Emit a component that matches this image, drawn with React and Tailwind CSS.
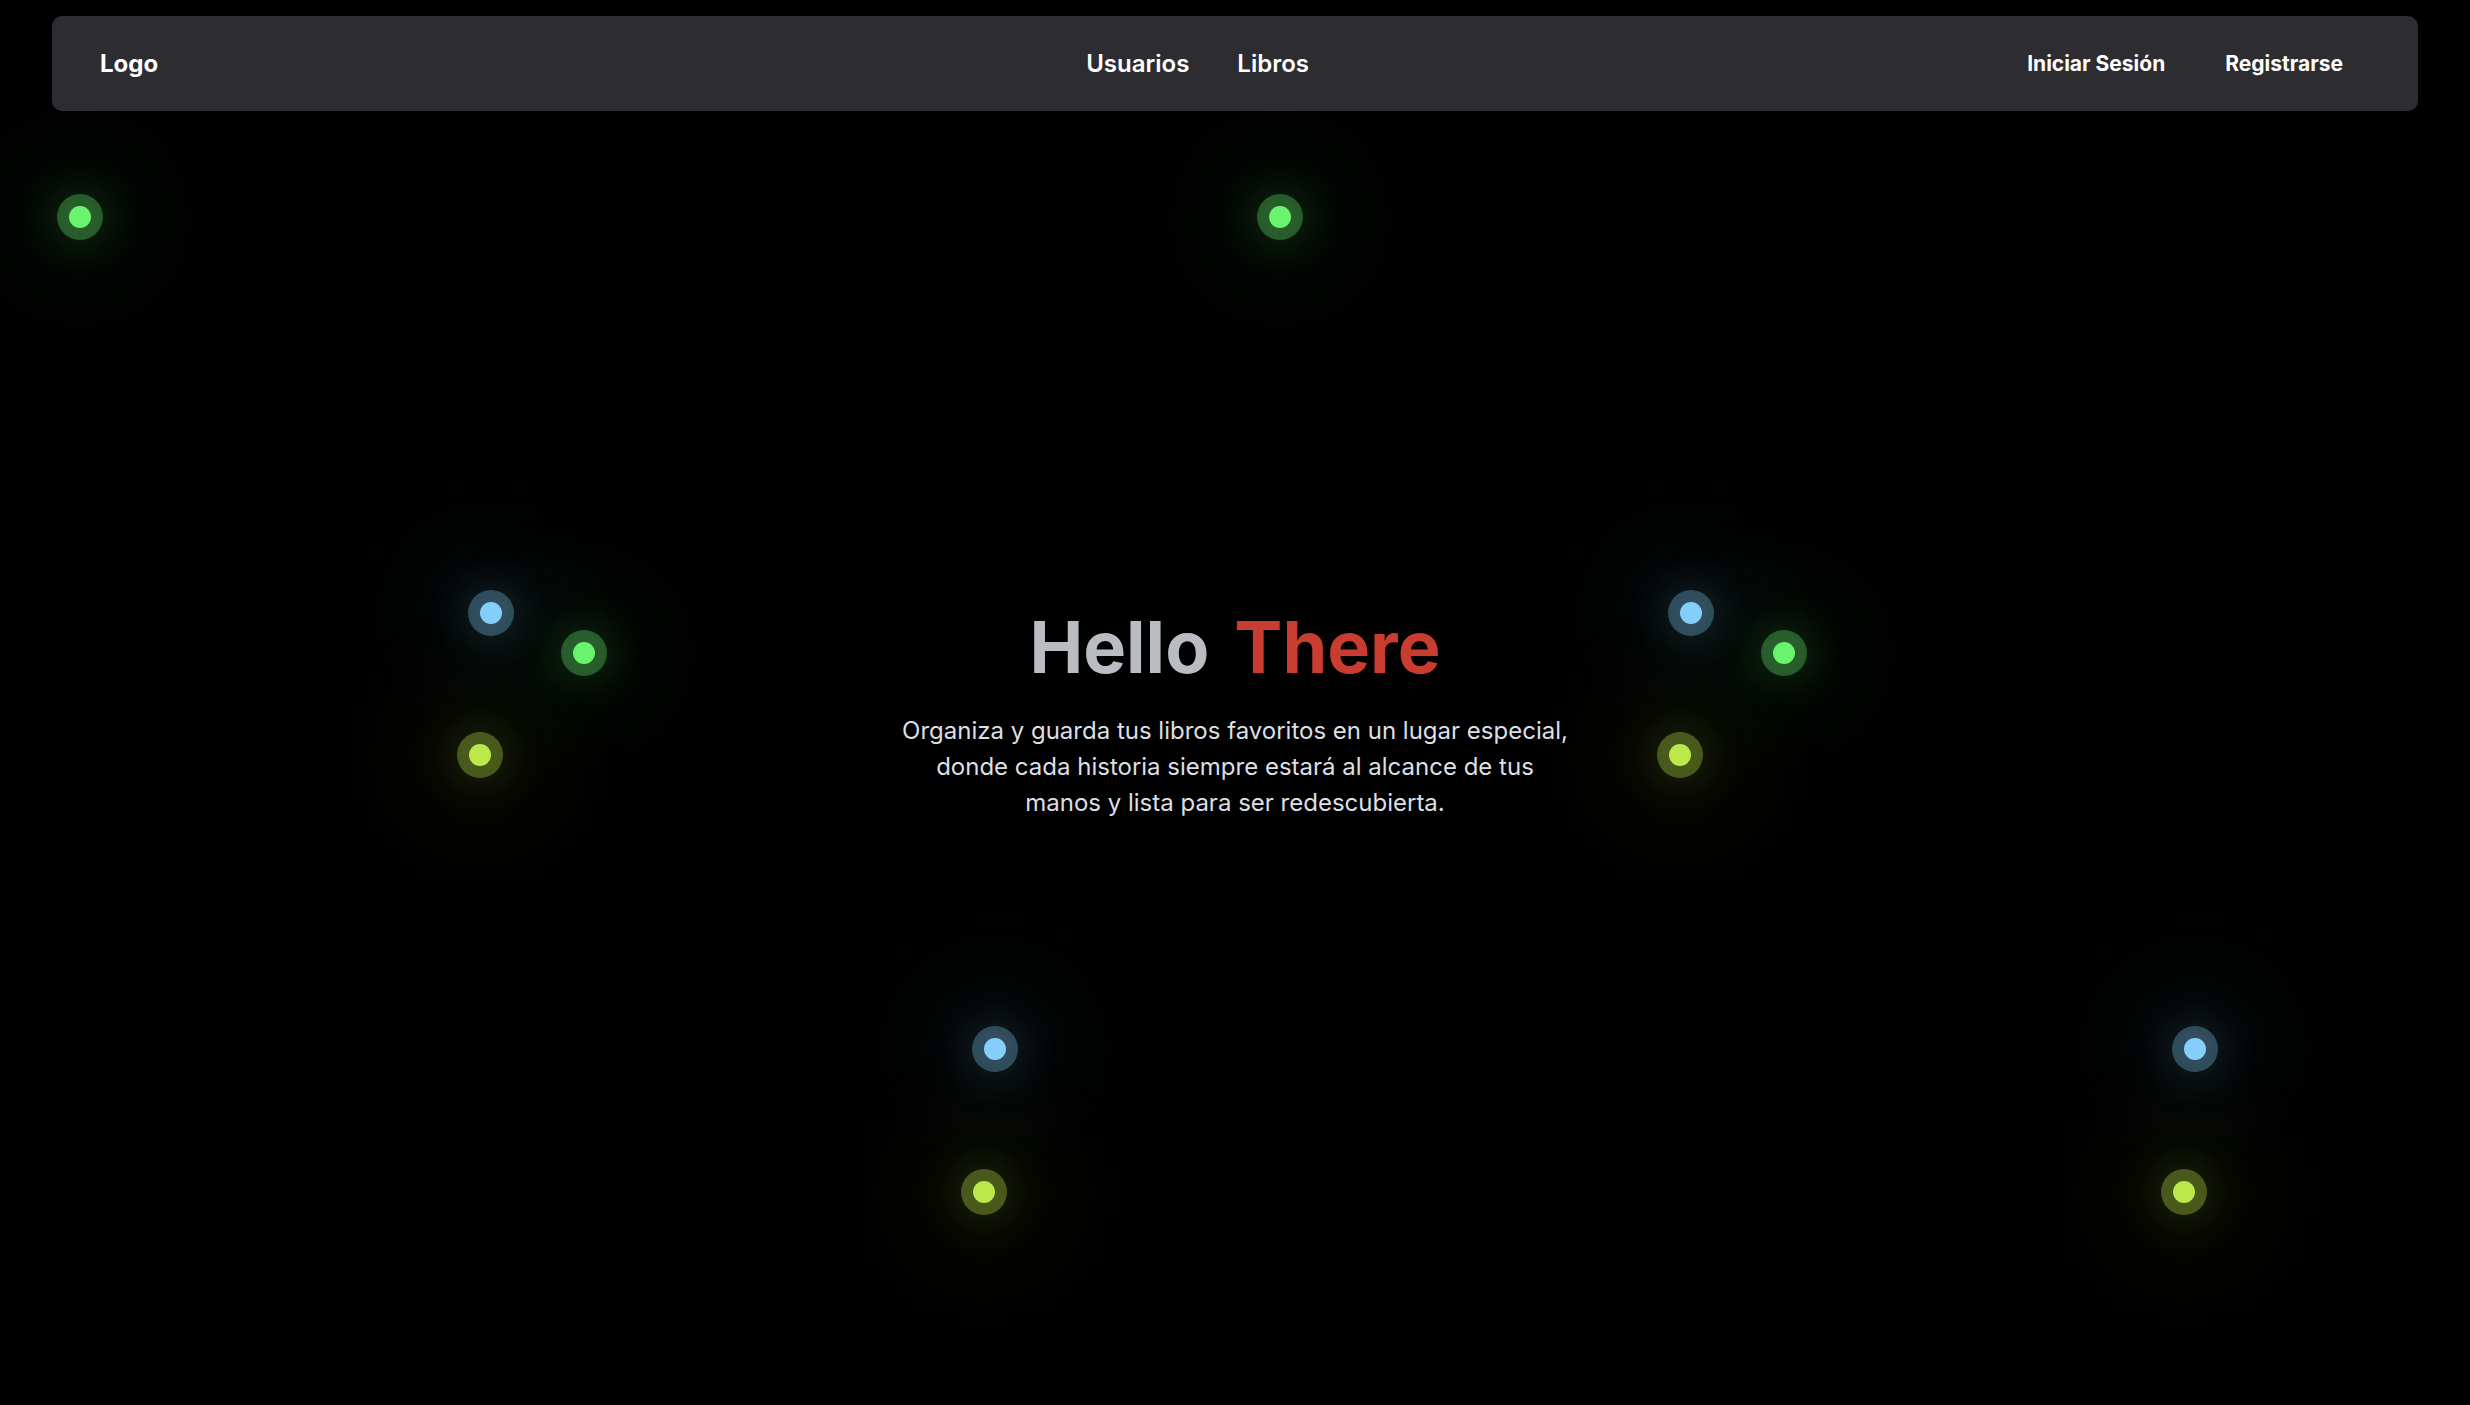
import React from "react";

// puntos luminosos del fondo (centro x, y en px)
const dots = [
  { x: 80, y: 217, color: "green" },
  { x: 1280, y: 217, color: "green" },
  { x: 491, y: 613, color: "blue" },
  { x: 584, y: 653, color: "green" },
  { x: 480, y: 755, color: "lime" },
  { x: 1691, y: 613, color: "blue" },
  { x: 1784, y: 653, color: "green" },
  { x: 1680, y: 755, color: "lime" },
  { x: 995, y: 1049, color: "blue" },
  { x: 984, y: 1192, color: "lime" },
  { x: 2195, y: 1049, color: "blue" },
  { x: 2184, y: 1192, color: "lime" },
];

const dotStyles = {
  green:
    "bg-[#6bf36f] shadow-[0_0_0_12px_rgba(107,243,111,0.32),0_0_36px_24px_rgba(107,243,111,0.1),0_0_120px_60px_rgba(107,243,111,0.05)]",
  blue:
    "bg-[#86cffc] shadow-[0_0_0_12px_rgba(134,207,252,0.3),0_0_36px_24px_rgba(134,207,252,0.1),0_0_120px_60px_rgba(134,207,252,0.05)]",
  lime:
    "bg-[#bde84b] shadow-[0_0_0_12px_rgba(189,232,75,0.32),0_0_36px_24px_rgba(189,232,75,0.1),0_0_120px_60px_rgba(189,232,75,0.05)]",
};

function GlowDot({ x, y, color }) {
  return (
    <span
      className={`absolute w-[22px] h-[22px] -ml-[11px] -mt-[11px] rounded-full ${dotStyles[color]}`}
      style={{ left: x, top: y }}
    />
  );
}

function Navbar() {
  return (
    <header className="relative z-10 mx-[52px] mt-4 h-[95px] rounded-[10px] bg-[#2d2c31] pl-12 pr-[51px] flex items-center text-white">
      <a href="#" className="text-2xl font-bold">
        Logo
      </a>

      <nav className="ml-[928px] flex items-center gap-12 text-2xl font-semibold">
        <a href="#">Usuarios</a>
        <a href="#">Libros</a>
      </nav>

      <div className="ml-auto flex items-center gap-3 text-[21px] font-bold">
        <button type="button" className="px-6 py-2">
          Iniciar Sesión
        </button>
        <button type="button" className="px-6 py-2">
          Registrarse
        </button>
      </div>
    </header>
  );
}

export default function App() {
  return (
    <div className="relative min-h-screen overflow-hidden bg-black font-['Inter','Noto_Sans',sans-serif]">
      {/* Fondo con luces */}
      <div className="absolute inset-0 pointer-events-none">
        {dots.map((d, i) => (
          <GlowDot key={i} {...d} />
        ))}
      </div>

      <Navbar />

      {/* Hero */}
      <main className="relative z-10 flex flex-col items-center pt-[500px] text-center">
        <h1 className="text-7xl font-bold leading-none">
          <span className="text-[#b9bdc1]">Hello</span>{" "}
          <span className="ml-2 text-[#c93d30]">There</span>
        </h1>
        <p className="mt-[30px] max-w-[720px] text-2xl leading-9 text-[#dcdfe4]">
          Organiza y guarda tus libros favoritos en un lugar especial,
          <br />
          donde cada historia siempre estará al alcance de tus
          <br />
          manos y lista para ser redescubierta.
        </p>
      </main>
    </div>
  );
}
